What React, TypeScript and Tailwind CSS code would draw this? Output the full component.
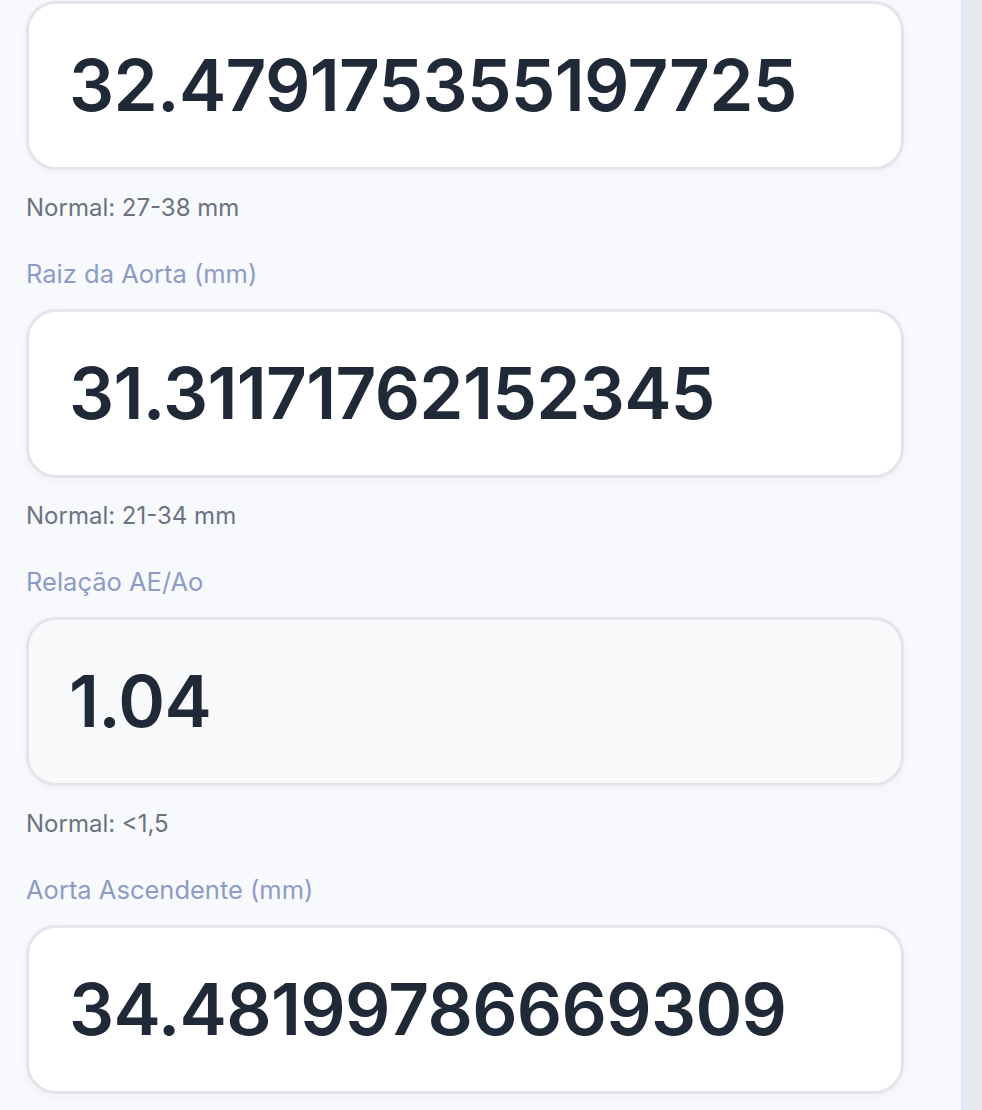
import React from "react";

type Field = {
  label: string;
  value: string;
  normal: string;
  readOnly?: boolean;
};

const FIELDS: Field[] = [
  { label: "Átrio Esquerdo (mm)", value: "32.479175355197725", normal: "Normal: 27-38 mm" },
  { label: "Raiz da Aorta (mm)", value: "31.31171762152345", normal: "Normal: 21-34 mm" },
  { label: "Relação AE/Ao", value: "1.04", normal: "Normal: <1,5", readOnly: true },
  { label: "Aorta Ascendente (mm)", value: "34.48199786669309", normal: "Normal: 20-37 mm" },
];

function MeasureField({ field }: { field: Field }) {
  return (
    <div className="flex flex-col">
      <label className="block text-[25.5px] leading-[30px] text-[#8c9cc4] mb-[20px]">
        {field.label}
      </label>
      <div
        className={
          field.readOnly
            ? "h-[169px] rounded-[30px] border-[3px] border-[#e4e5ea] bg-[#f8f9fa] px-[40px] flex items-center shadow-[0_2px_10px_rgba(15,23,42,0.04)]"
            : "h-[169px] rounded-[30px] border-[3px] border-[#e4e5ea] bg-white px-[40px] flex items-center shadow-[0_2px_10px_rgba(15,23,42,0.04)]"
        }
      >
        <span className="text-[71px] leading-none font-semibold text-[#1f2937] tracking-[-0.01em]">
          {field.value}
        </span>
      </div>
      <p className="mt-[23px] text-[24px] leading-[30px] text-[#6b7280]">{field.normal}</p>
    </div>
  );
}

export default function App() {
  return (
    <div
      className="flex h-[1110px] overflow-hidden bg-[#f8f9fd]"
      style={{ fontFamily: "Inter, 'Noto Sans', sans-serif" }}
    >
      <main className="flex-1 pl-[26px] pr-[57px]">
        {/* scrolled view: first label sits above the fold */}
        <div className="-mt-[49px] flex flex-col gap-[36px]">
          {FIELDS.map((f) => (
            <MeasureField key={f.label} field={f} />
          ))}
        </div>
      </main>
      <aside className="w-[21px] bg-[#e8e9ef] border-l-2 border-[#e0e4fa]" />
    </div>
  );
}
